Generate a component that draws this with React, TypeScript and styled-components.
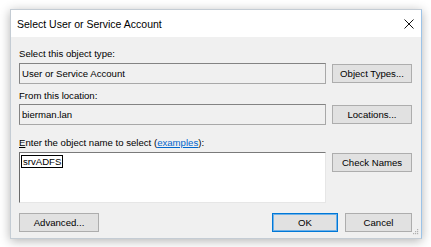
import React from "react";
import styled, { createGlobalStyle, css } from "styled-components";

const GlobalStyle = createGlobalStyle`
  html, body { margin: 0; padding: 0; background: #ffffff; }
  body { font-family: "Liberation Sans", Arial, sans-serif; color: #000; }
`;

const Page = styled.div`
  padding: 9px 0 0 10px;
  width: 431px;
  height: 247px;
  box-sizing: border-box;
`;

const Dialog = styled.div`
  position: relative;
  width: 412px;
  height: 230px;
  box-sizing: border-box;
  border: 1px solid #c4ccd4;
  border-right-color: #9cc3e8;
  box-shadow: 0 2px 10px rgba(0, 0, 0, 0.3);
  display: flex;
  flex-direction: column;
  background: #f0f0f0;
`;

const TitleBar = styled.div`
  height: 27px;
  flex: none;
  background: #ffffff;
  display: flex;
  align-items: center;
  padding: 0 7px 0 6px;
`;

const Title = styled.span`
  font-size: 10.5px;
  margin-top: 1px;
`;

const CloseIcon = styled.svg`
  margin-left: auto;
  margin-top: 1px;
`;

const Body = styled.div`
  flex: 1;
  display: flex;
  flex-direction: column;
  padding: 10px 9px 0 8px;
`;

const Label = styled.div<{ $top?: number; $after?: number }>`
  font-size: 9.6px;
  line-height: 14px;
  height: 14px;
  margin-top: ${(p) => p.$top ?? 0}px;
  margin-bottom: ${(p) => p.$after ?? 0}px;
  white-space: nowrap;
`;

const Row = styled.div<{ $align?: string }>`
  display: flex;
  gap: 6px;
  align-items: ${(p) => p.$align ?? "center"};
`;

const Field = styled.div<{ $tall?: boolean }>`
  flex: 1;
  box-sizing: border-box;
  font-size: 9.6px;
  padding: 0 2px;
  display: flex;
  ${(p) =>
    p.$tall
      ? css`
          height: 51px;
          background: #ffffff;
          border: 1px solid #e6e6e6;
          border-top-color: #7a7a7a;
          border-left-color: #6a6a6a;
          align-items: flex-start;
          padding-top: 2px;
        `
      : css`
          height: 21px;
          background: #f0f0f0;
          border: 1px solid #a8a8a8;
          border-top-color: #838383;
          border-left-color: #838383;
          align-items: center;
        `}
`;

const Selected = styled.span`
  border: 1px solid #000;
  padding: 0 1px;
  line-height: 11px;
  margin-left: -1px;
`;

const Button = styled.div<{ $w?: number; $default?: boolean }>`
  width: ${(p) => p.$w ?? 80}px;
  height: 19px;
  box-sizing: border-box;
  flex: none;
  background: #e1e1e1;
  border: 1px solid #adadad;
  font-size: 9.6px;
  display: flex;
  align-items: center;
  justify-content: center;
  ${(p) =>
    p.$default &&
    css`
      border-color: #0078d7;
      box-shadow: inset 0 0 0 1px #6fb1e8;
    `}
`;

const TopButton = styled(Button)`
  margin-top: 1px;
`;

const Footer = styled.div`
  display: flex;
  align-items: center;
  margin-top: 9px;
  height: 20px;
`;

const FooterRight = styled.div`
  margin-left: auto;
  display: flex;
  gap: 7px;
`;

const Link = styled.span`
  color: #0066cc;
  text-decoration: underline;
`;

const Key = styled.span`
  text-decoration: underline;
`;

const Grip = styled.svg`
  position: absolute;
  right: 2px;
  bottom: 2px;
`;

export default function App() {
  return (
    <>
      <GlobalStyle />
      <Page>
        <Dialog>
          <TitleBar>
            <Title>Select User or Service Account</Title>
            <CloseIcon width="10" height="10" viewBox="0 0 10 10">
              <path d="M0.5 0.5 L9.5 9.5 M9.5 0.5 L0.5 9.5" stroke="#111" strokeWidth="1" />
            </CloseIcon>
          </TitleBar>
          <Body>
            <Label $after={2}>Select this object type:</Label>
            <Row>
              <Field>User or Service Account</Field>
              <Button>Object Types...</Button>
            </Row>
            <Label $top={5} $after={1}>From this location:</Label>
            <Row>
              <Field>bierman.lan</Field>
              <Button>Locations...</Button>
            </Row>
            <Label $top={11} $after={2}>
              <Key>E</Key>nter the object name to select (<Link>examples</Link>):
            </Label>
            <Row $align="flex-start">
              <Field $tall>
                <Selected>srvADFS</Selected>
              </Field>
              <TopButton>Check Names</TopButton>
            </Row>
            <Footer>
              <Button $w={80}>Advanced...</Button>
              <FooterRight>
                <Button $w={66} $default>
                  OK
                </Button>
                <Button $w={67}>Cancel</Button>
              </FooterRight>
            </Footer>
          </Body>
          <Grip width="7" height="7" viewBox="0 0 7 7">
            <g fill="#b0b0b0">
              <rect x="5" y="0" width="1.2" height="1.2" />
              <rect x="3" y="2" width="1.2" height="1.2" />
              <rect x="5" y="2" width="1.2" height="1.2" />
              <rect x="1" y="4" width="1.2" height="1.2" />
              <rect x="3" y="4" width="1.2" height="1.2" />
              <rect x="5" y="4" width="1.2" height="1.2" />
            </g>
          </Grip>
        </Dialog>
      </Page>
    </>
  );
}
